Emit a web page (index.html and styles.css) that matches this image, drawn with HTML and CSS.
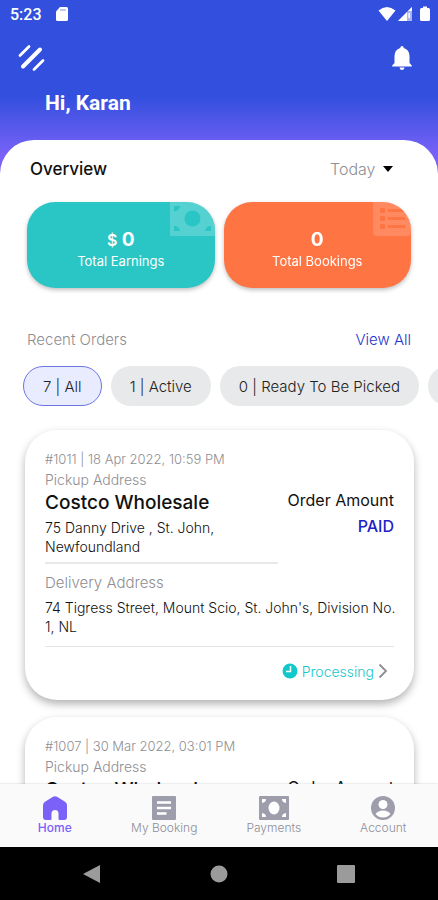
FILE: index.html
```html
<!DOCTYPE html>
<html lang="en">
<head>
<meta charset="utf-8">
<meta name="viewport" content="width=device-width, initial-scale=1">
<title>Overview</title>
<link rel="stylesheet" href="styles.css">
</head>
<body>
<div class="app">
  <header class="top">
    <div class="status">
      <span>5:23</span>
      <svg width="14" height="16" viewBox="0 0 14 16"><path d="M5 1h6.500Q13 1 13 2.500v11Q13 15 11.500 15h-9Q1 15 1 13.500V5.500z" fill="#fff"/><path d="M5 4h6" stroke="#7f92ea" stroke-width="1"/></svg>
      <div class="status-icons">
        <svg width="18" height="16" viewBox="0 0 18 16"><path d="M0.500 4.500Q9-2.500 17.500 4.500L9 15z" fill="#fff"/></svg>
        <svg width="16" height="16" viewBox="0 0 16 16"><path d="M15 1v14H1z" fill="#a9b5f2"/><path d="M10 6v9H1zM15 1v4h-4zM11.500 7h1.500v5h-1.500z" fill="#fff"/></svg>
        <svg class="battery" width="10" height="16" viewBox="0 0 10 16"><path d="M3 .5h4v1.500h1.500Q10 2 10 3.500v10Q10 15 8.500 15h-7Q0 15 0 13.500v-10Q0 2 1.500 2H3z" fill="#fff"/></svg>
      </div>
    </div>
    <div class="actions">
      <button class="icon-button" aria-label="Menu">
        <svg width="28" height="28" viewBox="0 0 28 28" fill="none" stroke="#fff" stroke-linecap="round"><path d="M2 11.500l9-9M16 25.500l9-9" stroke-width="2.800"/><path d="M5 22.500L22 5.500" stroke-width="4"/></svg>
      </button>
      <button class="icon-button" aria-label="Notifications">
        <svg width="20" height="26" viewBox="0 0 20 26" fill="#fff"><path d="M10 1Q11.500 1 11.800 3Q17.500 5 17.500 11v7l2.300 2.500v1H.2v-1L2.500 18v-7Q2.500 5 8.200 3Q8.500 1 10 1zM7.500 22.500h5Q12 25 10 25T7.500 22.500z"/></svg>
      </button>
    </div>
    <h1>Hi, Karan</h1>
  </header>

  <main class="sheet">
    <div class="overview-head">
      <h2>Overview</h2>
      <label class="period">
        <select aria-label="Period"><option>Today</option></select>
        <svg width="10" height="6" viewBox="0 0 10 6"><path d="M0 0h10L5 6z"/></svg>
      </label>
    </div>

    <section class="tiles">
      <div class="tile teal">
        <svg class="tile-art" width="45" height="34" viewBox="0 0 45 34"><path fill="#fff" fill-opacity=".2" fill-rule="evenodd" d="M0 0h45v34H0zM22.500 8.500a8 8 0 1 0 0 16 8 8 0 0 0 0-16zM4 4v5.500Q9 9 10 4zM41 4v5.500Q36 9 35 4zM4 29v-5Q9 24 10 29zM41 29v-5Q36 24 35 29z"/></svg>
        <strong><small>$</small> 0</strong>
        <span>Total Earnings</span>
      </div>
      <div class="tile orange">
        <svg class="tile-art" width="38" height="34" viewBox="0 0 38 34"><path fill="#fff" fill-opacity=".16" fill-rule="evenodd" d="M0 0h38v30Q38 34 34 34H4Q0 34 0 30zM7 6v5h5V6zM15 7v3h17V7zM7 14v5h5v-5zM15 15v3h17v-3zM7 22v5h5v-5zM15 23v3h17v-3z"/></svg>
        <strong>0</strong>
        <span>Total Bookings</span>
      </div>
    </section>

    <div class="recent-head">
      <h2>Recent Orders</h2>
      <a href="#all">View All</a>
    </div>

    <div class="chips">
      <button class="chip selected">7 | All</button>
      <button class="chip">1 | Active</button>
      <button class="chip">0 | Ready To Be Picked</button>
      <button class="chip">0 | Picked</button>
    </div>

    <div class="orders">
      <article class="card">
        <p class="meta">#1011 | 18 Apr 2022, 10:59 PM</p>
        <div class="pickup">
          <div class="place">
            <p class="caption">Pickup Address</p>
            <h3>Costco Wholesale</h3>
            <p class="address">75 Danny Drive , St. John, Newfoundland</p>
          </div>
          <div class="amount">
            <p>Order Amount</p>
            <p class="paid">PAID</p>
          </div>
        </div>
        <div class="delivery">
          <p class="caption">Delivery Address</p>
          <p class="address">74 Tigress Street, Mount Scio, St. John's, Division No. 1, NL</p>
        </div>
        <a class="state" href="#order-1011">
          <svg width="16" height="16" viewBox="0 0 16 16"><circle cx="8" cy="8" r="7.500" fill="#12c8cb"/><path d="M8.500 3v5.500H4" fill="none" stroke="#fff" stroke-width="1.500"/></svg>
          <span>Processing</span>
          <svg width="10" height="16" viewBox="0 0 10 16"><path d="M1.500 1.500L8 8l-6.500 6.500" fill="none" stroke="#8e8e93" stroke-width="1.800"/></svg>
        </a>
      </article>

      <article class="card">
        <p class="meta">#1007 | 30 Mar 2022, 03:01 PM</p>
        <div class="pickup">
          <div class="place">
            <p class="caption">Pickup Address</p>
            <h3>Costco Wholesale</h3>
          </div>
          <div class="amount">
            <p>Order Amount</p>
          </div>
        </div>
      </article>
    </div>
  </main>

  <nav class="tabs">
    <a class="tab active" href="#home">
      <svg width="26" height="24" viewBox="0 0 26 24"><path fill="#7b61f8" d="M11 .8Q13-.4 15 .8l8 5Q25 7 25 9.500V21q0 3-3 3h-4.500q-1 0-1-1v-5.500q0-3.500-3.500-3.500t-3.500 3.500V23q0 1-1 1H4q-3 0-3-3V9.500Q1 7 3 5.800z"/></svg>
      <span>Home</span>
    </a>
    <a class="tab" href="#booking">
      <svg width="24" height="24" viewBox="0 0 24 24"><rect width="24" height="24" rx="1" fill="#9d9dab"/><path d="M5 6.500h14M5 12h14M5 17.500h9.500" stroke="#fff" stroke-width="2.500"/></svg>
      <span>My Booking</span>
    </a>
    <a class="tab" href="#payments">
      <svg width="30" height="24" viewBox="0 0 30 24"><rect width="30" height="24" rx="1" fill="#9d9dab"/><path fill="#fff" d="M3 3h4Q7 6.500 3 7zM27 3h-4q0 3.500 4 4zM3 21h4q0-3.500-4-4zM27 21h-4q0-3.500 4-4z"/><ellipse cx="15" cy="12" rx="5.500" ry="6.500" fill="#fff"/></svg>
      <span>Payments</span>
    </a>
    <a class="tab" href="#account">
      <svg width="24" height="24" viewBox="0 0 24 24"><circle cx="12" cy="12" r="12" fill="#9d9dab"/><circle cx="12" cy="8.500" r="4.500" fill="#fff"/><path d="M4.500 18Q7 14.500 12 14.500t7.500 3.500Q16.500 21.500 12 21.500T4.500 18z" fill="#fff"/></svg>
      <span>Account</span>
    </a>
  </nav>

  <footer class="keys">
    <button aria-label="Back"><svg width="18" height="18" viewBox="0 0 18 18"><path d="M17 0v18L0 9z" fill="#9b9b9b"/></svg></button>
    <button aria-label="Home"><svg width="18" height="18" viewBox="0 0 18 18"><circle cx="9" cy="9" r="8.500" fill="#9b9b9b"/></svg></button>
    <button aria-label="Recents"><svg width="18" height="18" viewBox="0 0 18 18"><rect width="18" height="18" rx="1" fill="#9b9b9b"/></svg></button>
  </footer>
</div>
</body>
</html>
```
FILE: styles.css
```css
* {
  box-sizing: border-box;
}

body,
h1,
h2,
h3,
p {
  margin: 0;
}

body {
  font-family: Inter, sans-serif;
  font-weight: 300;
  color: #111;
}

button {
  font: inherit;
  border: 0;
  padding: 0;
  background: none;
}

a {
  text-decoration: none;
}

svg {
  display: block;
  flex: none;
}

.app {
  display: flex;
  flex-direction: column;
  height: 100vh;
  background: linear-gradient(#324fde 0, #324fde 96px, #7a62f8 156px);
}

.top {
  color: #fff;
}

.status {
  display: flex;
  align-items: center;
  gap: 13px;
  height: 28px;
  padding: 0 8px 0 10px;
  font: 500 16px Roboto, sans-serif;
}

.status-icons {
  display: flex;
  gap: 1px;
  margin-left: auto;
}

.battery {
  margin-left: 6px;
}

.actions {
  display: flex;
  justify-content: space-between;
  align-items: center;
  height: 60px;
  padding: 0 26px 0 18px;
}

h1 {
  padding: 0 45px;
  margin-bottom: 22px;
  font: 700 21px/30px Roboto, sans-serif;
}

.sheet {
  flex: 1;
  min-height: 0;
  overflow: hidden;
  border-radius: 34px 34px 0 0;
  background: #fff;
}

.overview-head,
.recent-head {
  display: flex;
  justify-content: space-between;
  align-items: center;
  height: 24px;
}

.overview-head {
  margin: 17px 45px 21px 30px;
}

.overview-head h2 {
  font-size: 17px;
  font-weight: 500;
}

.period {
  display: flex;
  align-items: center;
  gap: 7px;
}

select {
  appearance: none;
  border: 0;
  padding: 0;
  background: none;
  font: inherit;
  font-size: 16px;
  color: #8e8e93;
}

.tiles {
  display: grid;
  grid-template-columns: 1fr 1fr;
  gap: 9px;
  margin: 0 27px;
  filter: drop-shadow(0 2px 2px rgba(0, 0, 0, 0.25));
}

.tile {
  position: relative;
  display: flex;
  flex-direction: column;
  align-items: center;
  height: 86px;
  padding-top: 27px;
  overflow: hidden;
  border-radius: 28px;
  color: #fff;
  font-size: 13px;
  font-weight: 400;
  line-height: 20px;
}

.teal {
  background: #2ac6c5;
}

.orange {
  background: #ff7443;
}

.tile strong {
  font-size: 19px;
  line-height: 22px;
}

.tile small {
  font-size: 16px;
  font-weight: 600;
}

.tile-art {
  position: absolute;
  top: 0;
  right: 0;
}

.recent-head {
  margin: 39px 27px 15px;
  font-size: 15px;
}

.recent-head h2 {
  font-size: 15px;
  font-weight: 300;
  color: #8e8e93;
}

.recent-head a {
  color: #2433cf;
}

.chips {
  display: flex;
  gap: 9px;
  padding-left: 23px;
  overflow: hidden;
}

.chip {
  flex: none;
  height: 40px;
  padding: 0 19px;
  border-radius: 20px;
  background: #e8e9ea;
  color: #222;
  font-size: 15px;
}

.chip.selected {
  border: 1px solid #6a76e0;
  background: #e9ecff;
}

.orders {
  display: flex;
  flex-direction: column;
  gap: 17px;
  padding: 24px 24px 0 25px;
}

.card {
  padding: 19px 20px 18px;
  border-radius: 32px;
  background: #fff;
  box-shadow: 0 4px 9px rgba(0, 0, 0, 0.3);
}

.meta {
  font-size: 13px;
  line-height: 20px;
  color: #8e8e93;
}

.caption {
  font-size: 14px;
  line-height: 22px;
  color: #8e8e93;
}

.pickup {
  display: grid;
  grid-template-columns: 2fr 1fr;
}

.place {
  padding-bottom: 6px;
  border-bottom: 2px solid #e8e8e8;
}

.place h3 {
  margin-bottom: 4px;
  font-size: 19px;
  font-weight: 500;
  line-height: 23px;
}

.address {
  font-size: 14px;
  line-height: 19px;
}

.amount {
  padding-top: 18px;
  font-size: 16px;
  font-weight: 400;
  line-height: 26px;
  text-align: right;
  white-space: nowrap;
}

.paid {
  font-weight: 500;
  color: #1d22c9;
}

.delivery {
  padding: 8px 0 10px;
  border-bottom: 1px solid #e4e4e4;
}

.delivery .caption {
  font-size: 15px;
}

.delivery .address {
  margin-right: -8px;
  padding-top: 4px;
}

.state {
  display: flex;
  justify-content: flex-end;
  align-items: center;
  gap: 4px;
  height: 22px;
  margin: 13px 6px 0;
  font-size: 14px;
  color: #12c8cb;
}

.tabs {
  position: relative;
  display: grid;
  grid-template-columns: repeat(4, 1fr);
  padding: 12px 0 11px;
  background: #fafafa;
  box-shadow: 0 0 2px rgba(0, 0, 0, 0.2);
}

.tab {
  display: flex;
  flex-direction: column;
  align-items: center;
  font-size: 12px;
  line-height: 16px;
  color: #8e8e99;
}

.tab.active {
  font-weight: 500;
  color: #7b61f8;
}

.keys {
  display: grid;
  grid-template-columns: repeat(3, 1fr);
  justify-items: center;
  align-items: center;
  height: 53px;
  padding: 0 28px;
  background: #000;
}
```
